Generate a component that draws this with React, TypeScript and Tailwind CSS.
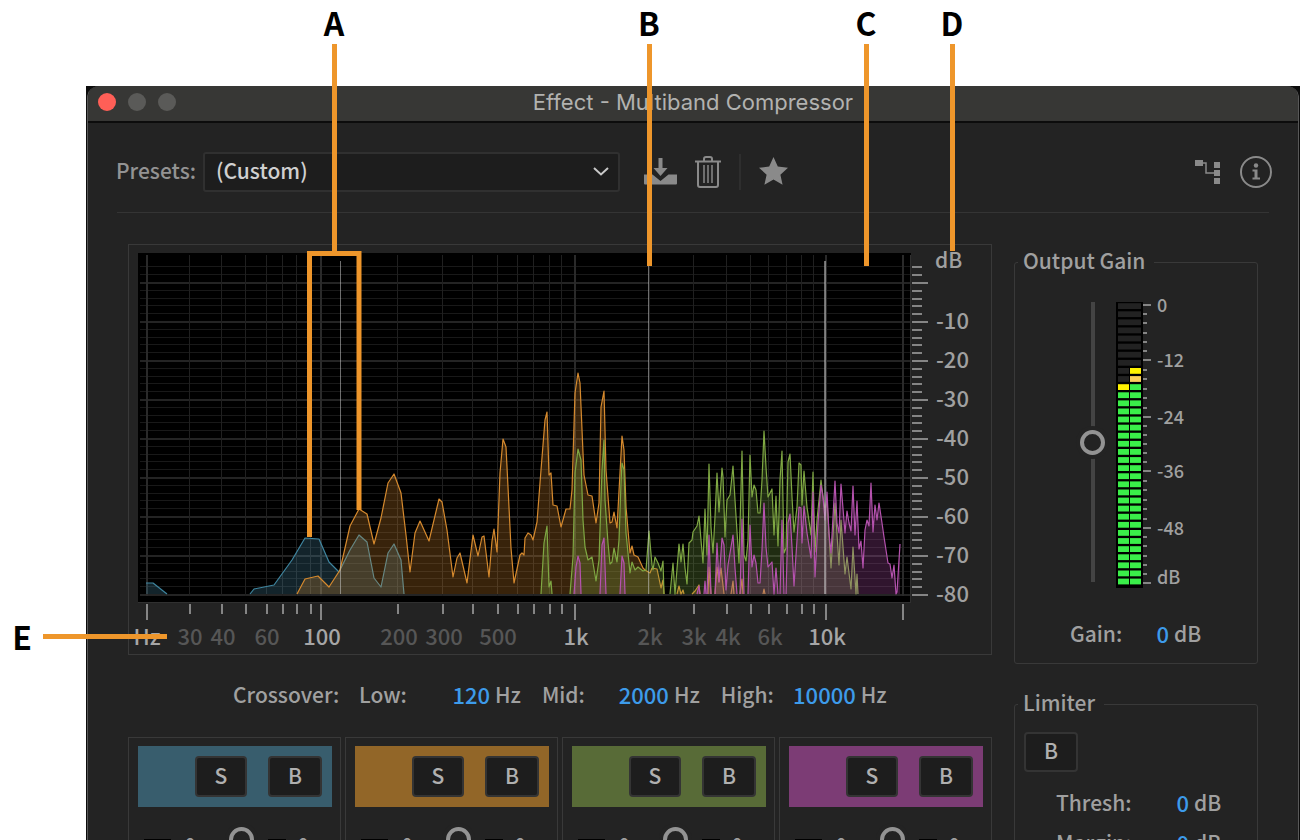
import { useId, useState } from "react";

type Tick = { x: number; major?: boolean; label?: string; labelX?: number };
type BandInfo = { name: string; header: string };

const BASE = 594;

const FREQ_TICKS: Tick[] = [
  { x: 147, major: true, label: "Hz" },
  { x: 190, label: "30" },
  { x: 222, label: "40", labelX: 223 },
  { x: 246 },
  { x: 267, label: "60" },
  { x: 283 },
  { x: 297 },
  { x: 311 },
  { x: 321, major: true, label: "100", labelX: 322 },
  { x: 398, label: "200", labelX: 399 },
  { x: 443, label: "300", labelX: 444 },
  { x: 473 },
  { x: 498, label: "500" },
  { x: 518 },
  { x: 534 },
  { x: 550 },
  { x: 562 },
  { x: 575, major: true, label: "1k", labelX: 576 },
  { x: 650, label: "2k" },
  { x: 694, label: "3k" },
  { x: 727, label: "4k", labelX: 728 },
  { x: 751 },
  { x: 769, label: "6k", labelX: 770 },
  { x: 787 },
  { x: 802 },
  { x: 814 },
  { x: 826, major: true, label: "10k", labelX: 827 },
  { x: 903, major: true },
];

// +4 dB down to -80 dB, one line every 2 dB
const DB_TICKS = Array.from({ length: 43 }, (_, i) => {
  const db = 4 - i * 2;
  return { db, y: Math.round(282 - db * 3.9), major: db % 10 === 0 };
});

const LOW = [
  "146,583 153,583 167,594",
  "250,594 254,589 274,585 292,560 305,538 319,539 329,562 339,572 350,550 359,535 367,542 374,578 381,587 388,553 394,544 401,560 404,594",
];

const LOW_MID = [
  "297,594 305,579 318,576 329,587 340,570 350,526 359,509 367,514 374,544 381,518 388,483 394,474 401,493 406,535 410,572 415,533 420,521 429,541 439,499 442,502 447,530 453,577 457,558 460,553 467,583 473,535 478,556 482,537 484,536 489,577 492,541 494,529 497,552 500,473 503,439 506,447 508,487 511,548 514,583 520,555 522,553 524,555 525,538 528,533 531,535 533,540 537,522 541,470 545,420 547,412 549,475 551,473 553,505 557,506 561,527 566,509 570,509 572,490 575,393 578,373 580,383 583,453 584,475 588,495 592,496 596,523 599,503 601,407 604,391 606,470 610,523 612,522 614,512 617,528 620,473 622,436 624,450 626,507 630,553 632,546 634,555 638,557 643,568 645,570 650,573 652,568 657,569 661,588 663,580 664,594",
  "677,594 679,586 681,594 683,590 684,594",
  "692,594 695,591 699,585 700,594",
  "708,594 709,567 711,594",
  "715,594 717,567 719,582 721,568 724,594",
  "731,594 733,581 734,594",
  "740,594 742,579 743,594",
  "763,594 764,589 765,594",
];

const HIGH_MID = [
  "541,594 544,543 547,526 549,587 551,581 552,594",
  "570,594 573,557 575,473 578,449 581,460 583,520 585,547 588,560 592,557 596,581 599,560 602,470 604,440 605,500 608,543 610,564 612,562 614,548 617,562 619,540 621,483 622,463 624,470 626,533 630,573 632,562 635,570 638,567 643,571 646,570 649,531 652,565 653,570 655,557 658,563 661,571 663,561 664,594",
  "670,594 673,563 675,594 679,544 681,562 683,544 685,568 687,584 689,543 692,540 693,532 697,526 699,516 701,540 703,563 705,509 707,555 709,464 711,527 713,553 715,517 717,473 719,512 722,468 723,477 725,537 727,500 730,495 733,466 735,500 739,563 742,451 744,555 746,561 748,540 750,455 752,497 754,485 756,490 758,513 760,513 762,480 764,431 766,467 768,497 772,489 774,535 776,496 778,546 780,480 782,451 784,553 786,548 788,462 790,454 792,497 794,532 797,507 799,463 801,465 802,505 804,471 807,507 811,535 813,472 815,552 817,520 821,480 823,497 825,510 827,500 831,568 835,503 839,565 841,520 845,574 847,557 851,589 853,547 856,594 857,574 858,594",
];

const HIGH = [
  "574,594 576,567 578,556 580,563 581,594",
  "600,594 602,545 604,538 606,594",
  "620,594 622,556 624,563 625,594",
  "697,594 699,586 700,594",
  "704,594 705,581 706,594",
  "707,594 709,535 711,594",
  "715,594 717,543 719,582 722,538 724,545 726,590 728,565 731,547 733,535 735,568 737,594",
  "740,594 742,519 744,594",
  "748,594 750,525 752,567 754,555 756,563 758,583 760,583 762,550 764,503 766,547 768,567 772,562 774,594 776,568 778,594",
  "780,594 782,520 784,594",
  "786,594 788,523 790,514 792,547 794,586 797,540 799,507 801,508 802,543 804,506 807,533 811,558 813,492 815,577 818,523 821,485 823,497 825,520 827,492 829,533 831,553 835,481 837,523 839,533 841,484 845,533 847,511 849,523 851,531 853,486 855,535 857,501 859,549 861,541 863,568 865,530 867,520 869,526 871,483 873,532 875,505 877,520 879,503 882,523 884,537 888,563 890,564 892,578 894,565 896,594 897,592 900,544",
];

const SPECTRUM = [
  { id: "low", stroke: "#3f86a0", fill: "#4a90ad", lines: LOW },
  { id: "lowMid", stroke: "#d68a2e", fill: "#e08c2c", lines: LOW_MID },
  { id: "highMid", stroke: "#7fa843", fill: "#7fae48", lines: HIGH_MID },
  { id: "high", stroke: "#b552ae", fill: "#c052b8", lines: HIGH },
];

const BANDS: BandInfo[] = [
  { name: "Low", header: "bg-[#385d6d]" },
  { name: "Low mid", header: "bg-[#926628]" },
  { name: "High mid", header: "bg-[#586b37]" },
  { name: "High", header: "bg-[#7c3c75]" },
];

const SLIDER =
  "m-0 w-[25px] appearance-none bg-transparent bg-[linear-gradient(#444,#444)] bg-[length:4px_100%] bg-center bg-no-repeat [direction:rtl] [writing-mode:vertical-lr] [&::-webkit-slider-thumb]:size-[25px] [&::-webkit-slider-thumb]:appearance-none [&::-webkit-slider-thumb]:rounded-full [&::-webkit-slider-thumb]:border-4 [&::-webkit-slider-thumb]:border-[#939393] [&::-webkit-slider-thumb]:bg-[#232323] [&::-webkit-slider-thumb]:shadow-[0_0_0_4px_#232323]";

function area(points: string) {
  const list = points.split(" ");
  const lastX = list[list.length - 1].split(",")[0];
  const firstX = list[0].split(",")[0];
  return `${firstX},${BASE} ${points} ${lastX},${BASE}`;
}

function SpectrumChart() {
  return (
    <svg
      viewBox="129 245 862 409"
      className="block h-auto w-full text-[22px]"
      role="img"
      aria-label="Frequency spectrum per band"
    >
      <rect x="138" y="253" width="773" height="350" fill="#000" />
      <g shapeRendering="crispEdges">
        {DB_TICKS.map((t) => (
          <rect
            key={t.db}
            x="140"
            y={t.y}
            width="770"
            height={t.major ? 2 : 1}
            fill={t.major ? "#242424" : "#191919"}
          />
        ))}
        {FREQ_TICKS.map((t) => (
          <rect
            key={t.x}
            x={t.x - 1}
            y="255"
            width={t.major ? 2 : 1}
            height="341"
            fill={t.major ? "#2a2a2a" : "#202020"}
          />
        ))}
        <rect x="138" y="602" width="773" height="1" fill="#303030" />
        <rect x="910" y="255" width="1" height="348" fill="#303030" />
      </g>

      {SPECTRUM.map((band) => (
        <g key={band.id} strokeLinejoin="round">
          {band.lines.map((points) => (
            <g key={points}>
              <polygon points={area(points)} fill={band.fill} fillOpacity="0.25" />
              <polyline points={points} fill="none" stroke={band.stroke} strokeWidth="1.2" />
            </g>
          ))}
        </g>
      ))}

      {/* crossover markers */}
      <g fill="#c8c8c8" fillOpacity="0.55" shapeRendering="crispEdges">
        <rect x="340" y="261" width="1" height="333" />
        <rect x="648" y="261" width="1" height="333" />
        <rect x="824" y="261" width="2" height="333" />
      </g>

      <g fill="#858585" shapeRendering="crispEdges">
        {FREQ_TICKS.map((t) => (
          <rect key={t.x} x={t.x - 1} y="604" width="2" height={t.major ? 16 : 10} />
        ))}
        {DB_TICKS.map((t) => (
          <rect key={t.db} x="912" y={t.y} width={t.major ? 16 : 10} height="2" />
        ))}
      </g>

      {FREQ_TICKS.filter((t) => t.label).map((t) => (
        <text
          key={t.x}
          x={t.labelX ?? t.x}
          y="645"
          textAnchor="middle"
          fill={t.major ? "#a6a6a6" : "#565656"}
        >
          {t.label}
        </text>
      ))}
      <g fill="#a0a0a0">
        <text x="935" y="268" className="text-[21px]">
          dB
        </text>
        {DB_TICKS.filter((t) => t.major && t.db < 0).map((t) => (
          <text key={t.db} x="936" y={t.y + 8}>
            {t.db}
          </text>
        ))}
      </g>
    </svg>
  );
}

function segmentColor(side: number, row: number) {
  if (side === 0) return row < 10 ? "#222" : row === 10 ? "#fff200" : "#3aee49";
  if (row < 8) return "#222";
  if (row === 8) return "#fff200";
  return row === 9 ? "#fbcf5b" : "#3aee49";
}

function LevelMeter() {
  const rows = Array.from({ length: 35 }, (_, i) => i);
  const majors = [2, 57, 114, 168, 225, 280];
  const labels = ["0", "-12", "-24", "-36", "-48", "dB"];
  return (
    <svg
      width="74"
      height="286"
      viewBox="0 0 74 286"
      className="overflow-visible text-[18px]"
      role="img"
      aria-label="Output level"
    >
      <rect width="27" height="286" fill="#000" />
      {rows.map((row) => (
        <g key={row}>
          <rect x="2" y={1.2 + row * 8.1} width={row < 8 ? 23 : 11} height="5.8" fill={segmentColor(0, row)} />
          {row >= 8 && (
            <rect x="14" y={1.2 + row * 8.1} width="11" height="5.8" fill={segmentColor(1, row)} />
          )}
        </g>
      ))}
      <g fill="#858585">
        {majors.map((y) => (
          <rect key={y} x="27" y={y} width="8" height="2" />
        ))}
        {majors.slice(0, -1).map((y, i) =>
          [1, 2, 3, 4, 5].map((n) => (
            <rect
              key={`${i}-${n}`}
              x="27"
              y={Math.round(y + ((majors[i + 1] - y) * n) / 6)}
              width="4"
              height="2"
            />
          ))
        )}
      </g>
      <g fill="#a0a0a0">
        {labels.map((label, i) => (
          <text key={label} x="41" y={label === "dB" ? 282 : majors[i] + 8}>
            {label}
          </text>
        ))}
      </g>
    </svg>
  );
}

function NumberField({
  label,
  value,
  unit,
  labelClass,
  inputClass,
}: {
  label: string;
  value: string;
  unit: string;
  labelClass: string;
  inputClass: string;
}) {
  const id = useId();
  const [text, setText] = useState(value);
  return (
    <div className="flex items-center">
      <label htmlFor={id} className={`shrink-0 ${labelClass}`}>
        {label}
      </label>
      <input
        id={id}
        value={text}
        onChange={(e) => setText(e.target.value)}
        className={`h-7 min-w-0 bg-transparent p-0 text-right text-[22px] text-[#3d9bea] outline-none ${inputClass}`}
      />
      <span className="ml-[5px]">{unit}</span>
    </div>
  );
}

function BoxButton({ children, className }: { children: string; className: string }) {
  return (
    <button
      type="button"
      className={`flex items-center justify-center rounded-[4px] border-2 border-[#343434] bg-[#1d1d1d] pb-1 text-[#b0b0b0] ${className}`}
    >
      {children}
    </button>
  );
}

function Band({ band }: { band: BandInfo }) {
  return (
    <section className="border border-[#393939] pt-2 pr-2 pl-[9px]" aria-label={band.name}>
      <div className={`flex h-[61px] items-center justify-end gap-[21px] pr-[10px] ${band.header}`}>
        <BoxButton className="h-[41px] w-[52px]">S</BoxButton>
        <BoxButton className="h-[41px] w-[54px]">B</BoxButton>
      </div>
      <div className="flex pt-5 pl-[6px] text-[18px] leading-[26px]">
        <div className="mt-3 h-40 w-[27px] bg-black" />
        <span className="mt-[3px] ml-[14px] w-[10px]">0</span>
        <input
          type="range"
          min="-60"
          max="0"
          defaultValue="0"
          aria-label={`${band.name} threshold`}
          className={`ml-[34px] h-40 ${SLIDER}`}
        />
        <div className="mt-3 ml-[14px] h-40 w-[18px] bg-black" />
        <span className="mt-[3px] ml-[12px]">0</span>
      </div>
    </section>
  );
}

function Toolbar() {
  return (
    <div className="mt-[29px] flex h-10 items-center pr-[26px] pl-[28px] text-[#8a8a8a]">
      <label htmlFor="preset" className="w-[87px] shrink-0 pb-1 text-[#939393]">
        Presets:
      </label>
      <div className="relative h-10 w-[417px]">
        <select
          id="preset"
          className="h-full w-full appearance-none rounded-[3px] border-2 border-[#303030] bg-[#1d1d1d] pb-1 pl-[11px] text-[21px] text-[#d0d0d0] outline-none"
        >
          <option>(Custom)</option>
        </select>
        <svg
          width="16"
          height="9"
          viewBox="0 0 16 9"
          className="pointer-events-none absolute top-[15px] right-[11px]"
        >
          <path d="M1 1l7 6.500 7-6.500" fill="none" stroke="#c8c8c8" strokeWidth="2" />
        </svg>
      </div>
      <button type="button" aria-label="Save preset" className="ml-6">
        <svg width="33" height="30" viewBox="0 0 33 30" fill="currentColor">
          <path d="M14.500 1h4v10h5l-7 8-7-8h5z" />
          <path d="M0 17.500h8.500l8 6.500 8-6.500H33V26.500a1 1 0 0 1-1 1H1a1 1 0 0 1-1-1z" />
        </svg>
      </button>
      <button type="button" aria-label="Delete preset" className="ml-[18px]">
        <svg width="26" height="34" viewBox="0 0 26 34" fill="none" stroke="currentColor" strokeWidth="2">
          <path d="M0 6.500h26M9 6V4q0-2 2-2h4q2 0 2 2v2M3 7v23q0 2 2 2h16q2 0 2-2V7" />
          <path d="M9 10v18M13 10v18M17 10v18" strokeWidth="1.500" />
        </svg>
      </button>
      <div className="ml-[18px] h-9 w-[2px] bg-[#2e2e2e]" />
      <button type="button" aria-label="Favorite" className="ml-[18px]">
        <svg width="29" height="30" viewBox="0 0 29 30" fill="currentColor">
          <path d="M14.500 0l4.300 9.600 10.200 1.100-7.600 7 2.200 10.100-9.100-5.200-9.100 5.200 2.200-10.100-7.600-7 10.200-1.100z" />
        </svg>
      </button>
      <button type="button" aria-label="Routing" className="ml-auto">
        <svg width="25" height="26" viewBox="0 0 25 26" fill="currentColor">
          <rect x="0" y="1" width="8" height="6" />
          <rect x="19" y="3" width="6" height="6" />
          <rect x="19" y="11" width="6" height="6" />
          <rect x="19" y="19" width="6" height="6" />
          <path d="M8 4h3v10h8" fill="none" stroke="currentColor" strokeWidth="1.500" />
        </svg>
      </button>
      <button type="button" aria-label="Info" className="ml-5">
        <svg width="32" height="34" viewBox="0 0 32 34">
          <circle cx="16" cy="17" r="15" fill="none" stroke="currentColor" strokeWidth="2" />
          <circle cx="16" cy="10.500" r="2.200" fill="currentColor" />
          <path d="M12.500 14.500h5v8h2.500v2h-7.500v-2h2v-6h-2z" fill="currentColor" />
        </svg>
      </button>
    </div>
  );
}

// lettered callouts drawn over the dialog
function Callouts() {
  return (
    <svg
      width="1000"
      height="660"
      viewBox="0 0 1000 660"
      className="pointer-events-none absolute top-0 left-0"
    >
      <g fill="none" stroke="#ee962b" strokeWidth="5">
        <path d="M334.500 44v209.500M309.500 537V253.500h49.500V510" />
        <path d="M649.500 44v222M866.500 44v222M952.500 44v207M43 636.500h124" />
      </g>
      <g className="text-[32px] font-bold" fill="#000" textAnchor="middle">
        <text x="334" y="36">A</text>
        <text x="649" y="36">B</text>
        <text x="866" y="36">C</text>
        <text x="952" y="36">D</text>
        <text x="22" y="650">E</text>
      </g>
    </svg>
  );
}

const FIELDSET = "min-w-0 rounded-[3px] border border-[#393939]";
const LEGEND = "ml-[3px] pr-[9px] pb-1 pl-[5px] leading-6";

export default function App() {
  return (
    <div className="relative h-screen overflow-hidden bg-white pt-[86px] pl-[86px] font-['Noto_Sans_CJK_SC','Noto_Sans',sans-serif] text-[21px] leading-7 font-medium text-[#a0a0a0]">
      <div className="h-full bg-[#0c0c0c] px-px">
        <main className="h-full overflow-hidden rounded-t-xl border-x border-[#585858] bg-[#232323]">
          <header className="grid h-[37px] grid-cols-[1fr_auto_1fr] items-center border-b-2 border-[#0c0c0c] bg-[#373735] pb-[3px]">
            <div className="flex gap-3 pl-[10px]">
              <button type="button" aria-label="Close" className="size-[18px] rounded-full bg-[#ff5f57]" />
              <button type="button" aria-label="Minimize" className="size-[18px] rounded-full bg-[#5a5a58]" />
              <button type="button" aria-label="Zoom" className="size-[18px] rounded-full bg-[#5a5a58]" />
            </div>
            <h1 className="font-['Inter','Noto_Sans',sans-serif] text-[22px] font-normal text-[#b2b2b0]">
              Effect - Multiband Compressor
            </h1>
          </header>

          <Toolbar />
          <hr className="mx-[29px] mt-5 border-t border-[#343434]" />

          <div className="mt-[31px] flex gap-[22px] px-10">
            <div className="min-w-0 flex-1">
              <div className="border border-[#393939]">
                <SpectrumChart />
              </div>

              <div className="flex h-[82px] items-center pb-1 pl-[105px]">
                <span className="w-[126px]">Crossover:</span>
                <NumberField label="Low:" value="120" unit="Hz" labelClass="w-[52px]" inputClass="w-[79px]" />
                <div className="ml-[21px]">
                  <NumberField label="Mid:" value="2000" unit="Hz" labelClass="w-[48px]" inputClass="w-[79px]" />
                </div>
                <div className="ml-[21px]">
                  <NumberField label="High:" value="10000" unit="Hz" labelClass="w-[56px]" inputClass="w-[79px]" />
                </div>
              </div>

              <div className="grid grid-cols-4 gap-1">
                {BANDS.map((band) => (
                  <Band key={band.name} band={band} />
                ))}
              </div>
            </div>

            <aside className="w-[244px] shrink-0 pt-1">
              <fieldset className={`${FIELDSET} pb-4`}>
                <legend className={LEGEND}>Output Gain</legend>
                <div className="flex items-start pt-[26px] pl-[65px]">
                  <input
                    type="range"
                    min="-18"
                    max="18"
                    defaultValue="0"
                    aria-label="Output gain"
                    className={`h-[280px] ${SLIDER}`}
                  />
                  <div className="ml-[11px]">
                    <LevelMeter />
                  </div>
                </div>
                <div className="mt-[31px] pl-[55px]">
                  <NumberField label="Gain:" value="0" unit="dB" labelClass="w-[60px]" inputClass="w-[39px]" />
                </div>
              </fieldset>

              <fieldset className={`mt-[26px] ${FIELDSET}`}>
                <legend className={LEGEND}>Limiter</legend>
                <div className="pt-[14px] pl-[9px]">
                  <BoxButton className="h-10 w-[54px]">B</BoxButton>
                </div>
                <div className="mt-4 flex flex-col gap-3 pb-4 pl-[41px]">
                  <NumberField label="Thresh:" value="0" unit="dB" labelClass="w-[80px]" inputClass="w-[53px]" />
                  <NumberField label="Margin:" value="0" unit="dB" labelClass="w-[80px]" inputClass="w-[53px]" />
                </div>
              </fieldset>
            </aside>
          </div>
        </main>
      </div>
      <Callouts />
    </div>
  );
}
